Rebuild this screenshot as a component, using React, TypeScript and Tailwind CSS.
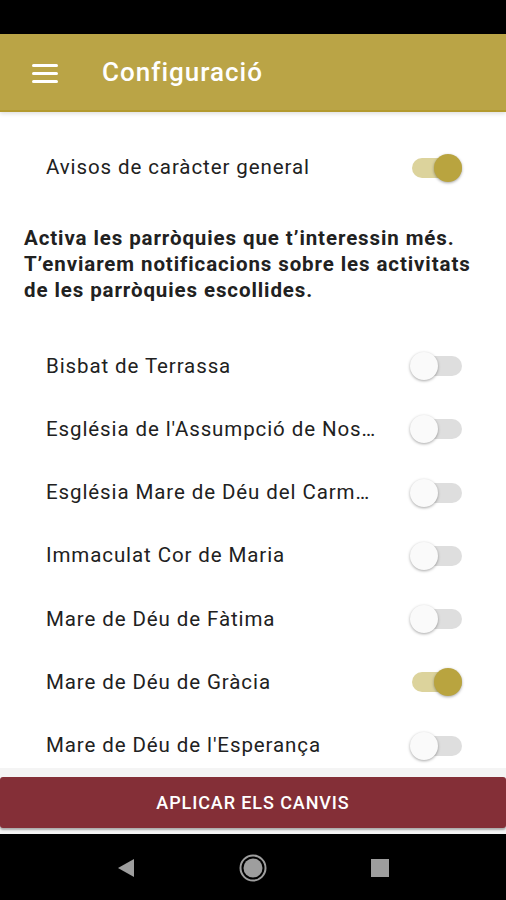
import { useState } from "react";

const parishes = [
  { name: "Bisbat de Terrassa", on: false },
  { name: "Església de l'Assumpció de Nostra Senyora", on: false },
  { name: "Església Mare de Déu del Carme de Terrassa", on: false },
  { name: "Immaculat Cor de Maria", on: false },
  { name: "Mare de Déu de Fàtima", on: false },
  { name: "Mare de Déu de Gràcia", on: true },
  { name: "Mare de Déu de l'Esperança", on: false },
];

const Toggle = ({ on, onClick }: { on: boolean; onClick: () => void }) => {
  return (
    <button
      onClick={onClick}
      className="relative flex items-center w-[54px] h-[30px] shrink-0"
    >
      <div
        className={`ml-[2px] w-[50px] h-[20px] rounded-full ${
          on ? "bg-[#dcd39c]" : "bg-[#dedede]"
        }`}
      />
      <div
        className={`absolute top-[1px] w-[28px] h-[28px] rounded-full shadow-[0_1px_3px_rgba(0,0,0,0.35)] ${
          on ? "left-[24px] bg-[#b9a43f]" : "left-0 bg-[#fafafa]"
        }`}
      />
    </button>
  );
};

const Row = ({
  label,
  on,
  onClick,
}: {
  label: string;
  on: boolean;
  onClick: () => void;
}) => {
  return (
    <div className="flex items-center justify-between h-[63.3px] pl-[46px] pr-[42px]">
      <p className="truncate text-[20.5px] tracking-[0.9px] text-[#212121] w-[332px]">
        {label}
      </p>
      <Toggle on={on} onClick={onClick} />
    </div>
  );
};

export default function App() {
  const [general, setGeneral] = useState(true);
  const [states, setStates] = useState(parishes.map((p) => p.on));

  return (
    <div className="w-[506px] h-[900px] flex flex-col bg-white overflow-hidden font-['Roboto',sans-serif]">
      <div className="h-[34px] bg-black shrink-0" />

      <div className="h-[78px] shrink-0 bg-[#baa446] border-b-[2px] border-[#b39a2f] shadow-[0_2px_4px_rgba(0,0,0,0.12)] flex items-center relative z-10">
        <div className="ml-[32px] w-[26px] flex flex-col gap-[5px] mt-[2px]">
          <div className="h-[3px] bg-white rounded-sm" />
          <div className="h-[3px] bg-white rounded-sm" />
          <div className="h-[3px] bg-white rounded-sm" />
        </div>
        <h1 className="ml-[44px] text-[26px] tracking-[1px] font-medium text-white">
          Configuració
        </h1>
      </div>

      <div className="flex-1 overflow-hidden pt-[24px]">
        <Row
          label="Avisos de caràcter general"
          on={general}
          onClick={() => setGeneral(!general)}
        />
        <p className="mt-[26px] px-[24px] text-[20.5px] tracking-[0.9px] leading-[26px] font-bold text-[#212121]">
          Activa les parròquies que t’interessin més. T’enviarem notificacions
          sobre les activitats de les parròquies escollides.
        </p>
        <div className="mt-[31px]">
          {parishes.map((p, i) => (
            <Row
              key={p.name}
              label={p.name}
              on={states[i]}
              onClick={() =>
                setStates(states.map((s, j) => (j === i ? !s : s)))
              }
            />
          ))}
        </div>
      </div>

      <div className="shrink-0 bg-[#f4f4f4] pt-[9px] pb-[6px] relative z-10">
        <button className="w-full h-[51px] bg-[#842f37] rounded-[3px] shadow-[0_2px_2px_rgba(0,0,0,0.3)] text-white text-[18px] font-medium tracking-[0.9px]">
          APLICAR ELS CANVIS
        </button>
      </div>

      <div className="h-[66px] shrink-0 bg-black flex items-center justify-center">
        <div className="flex items-center gap-[104px] mt-[1px]">
          <svg width="18" height="20" viewBox="0 0 18 20">
            <path d="M17 1 L17 19 L1 10 Z" fill="#9e9e9e" />
          </svg>
          <svg width="28" height="28" viewBox="0 0 28 28">
            <circle cx="14" cy="14" r="12.5" fill="none" stroke="#9e9e9e" strokeWidth="2" />
            <circle cx="14" cy="14" r="9.5" fill="#9e9e9e" />
          </svg>
          <div className="w-[18px] h-[18px] bg-[#9e9e9e]" />
        </div>
      </div>
    </div>
  );
}
